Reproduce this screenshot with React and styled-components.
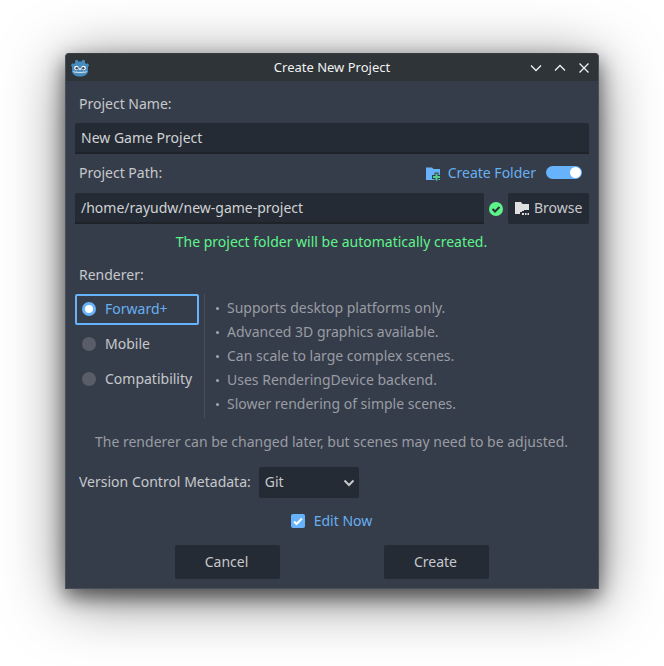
import React from 'react';
import styled, { createGlobalStyle } from 'styled-components';

const Global = createGlobalStyle`
  html, body { margin: 0; padding: 0; background: #fff; }
  body { width: 664px; height: 666px; overflow: hidden; font-family: "Noto Sans", sans-serif; }
`;
const Stage = styled.div`padding: 53px 65px 77px;`;
const Win = styled.div`
  width: 534px; height: 536px; box-sizing: border-box; background: #363d4a;
  border: 1px solid #4a505a; border-top-color: #3a3e42; border-radius: 4px 4px 0 0;
  box-shadow: 0 8px 20px rgba(0,0,0,.55), 0 10px 60px rgba(0,0,0,.5);
  display: flex; flex-direction: column; overflow: hidden;
`;
const TitleBar = styled.div`
  height: 27px; flex: none; background: #2f3438; display: flex; align-items: center;
  padding: 0 6px 0 5px; position: relative; color: #f0f1f2; font-size: 13px;
`;
const Title = styled.div`position: absolute; left: 0; right: 0; text-align: center; top: 4px; line-height: 19px;`;
const Controls = styled.div`margin-left: auto; display: flex; gap: 8px; z-index: 1;`;
const Content = styled.div`
  padding: 13px 9px 0; display: flex; flex-direction: column; color: #c6c8cc; font-size: 14px; line-height: 19px;
`;
const Label = styled.div`padding-left: 4px; height: 19px; line-height: 19px;`;
const Field = styled.div`
  height: 31px; box-sizing: border-box; background: #252b34; border-bottom: 2px solid #1e2229; border-radius: 2px 2px 0 0;
  color: #d0d2d5; padding: 5px 6px; line-height: 19px; ${p => p.$grow ? 'flex: 1;' : ''}
`;
const NameField = styled(Field)`margin-top: 10px;`;
const PathHead = styled.div`display: flex; align-items: center; margin-top: 9px; height: 19px; padding: 0 7px 0 4px;`;
const FolderToggle = styled.div`margin-left: auto; display: flex; align-items: center; color: #66b0f2; gap: 7px;`;
const Toggle = styled.div`
  width: 36px; height: 13px; margin-left: 3px; background: #66b3fb; border-radius: 7px; display: flex; justify-content: flex-end; align-items: center; padding-right: 1px; box-sizing: border-box;
  &::after { content: ""; width: 11px; height: 11px; background: #fff; border-radius: 50%; }
`;
const PathRow = styled.div`display: flex; align-items: center; margin-top: 11px;`;
const OkIcon = styled.svg`margin: 0 5px; flex: none;`;
const Browse = styled.div`
  width: 81px; height: 31px; box-sizing: border-box; background: #252b34; border-radius: 2px; display: flex; align-items: center; gap: 5px; padding: 0 0 2px 7px; color: #c6c8cc;
`;
const Valid = styled.div`text-align: center; color: #5df58a; margin-top: 8px; height: 19px; padding-right: 1px;`;
const RendererLabel = styled(Label)`margin-top: 14px;`;
const RendererRow = styled.div`display: flex; margin-top: 10px; height: 124px;`;
const Radios = styled.div`width: 124px; flex: none; display: flex; flex-direction: column; gap: 4px;`;
const Radio = styled.div`
  height: 31px; box-sizing: border-box; display: flex; align-items: center; gap: 9px; padding: 0 0 1px 5px;
  color: ${p => p.$on ? '#66b0f2' : '#c6c8cc'};
  ${p => p.$on ? 'border: 2px solid #66b3fb; border-radius: 2px;' : 'border: 2px solid transparent;'}
`;
const RadioText = styled.span`margin-bottom: 1px;`;
const Dot = styled.span`
  width: 14px; height: 14px; border-radius: 50%; flex: none; box-sizing: border-box;
  ${p => p.$on ? 'background: #fff; border: 3px solid #66b3fb;' : 'background: #585d67;'}
`;
const Sep = styled.div`width: 1px; background: #4a505b; margin-left: 5px; flex: none;`;
const Info = styled.ul`
  list-style: none; margin: 0; padding: 2px 0 0 11px; color: #999ca3; display: flex; flex-direction: column;
`;
const Item = styled.li`
  height: 24px; line-height: 24px; display: flex; align-items: center; gap: 8px;
  &::before { content: ""; width: 3px; height: 3px; border-radius: 50%; background: #a5a8ad; flex: none; }
`;
const Note = styled.div`text-align: center; color: #999ca3; margin-top: 14px; height: 19px; padding-right: 1px;`;
const VcsRow = styled.div`display: flex; align-items: center; gap: 8px; margin-top: 16px; padding-left: 4px;`;
const VcsLabel = styled.span`margin-bottom: 2px;`;
const Select = styled.div`
  width: 100px; height: 31px; box-sizing: border-box; background: #252b34; border-radius: 2px; padding: 0 4px 0 6px; display: flex; align-items: center; justify-content: space-between; color: #c6c8cc;
`;
const SelectText = styled.span`margin-bottom: 2px;`;
const EditRow = styled.div`display: flex; align-items: center; justify-content: center; gap: 9px; margin-top: 13px; color: #66b0f2; height: 19px; padding-right: 1px;`;
const Check = styled.svg`flex: none;`;
const Buttons = styled.div`display: flex; justify-content: center; gap: 104px; margin-top: 15px;`;
const Button = styled.div`
  width: 105px; height: 34px; box-sizing: border-box; padding: 0 2px 2px 0; background: #252b34; border-radius: 2px; display: flex; align-items: center; justify-content: center; color: #c6c8cc;
`;

const Ctl = ({ d }) => (
  <svg width="16" height="16" viewBox="0 0 16 16" fill="none" stroke="#f0f1f2" strokeWidth="1.3"><path d={d} /></svg>
);
const Logo = () => (
  <svg width="18" height="18" viewBox="0 0 18 18">
    <path fill="#478cbf" d="M6.300 .8l1 1.700h3.400l1-1.700 2.400.8-.2 2.200 1.400 1.100 1.700-.6L18 6.500l-1 1.600V13c-1 2.500-3.500 4.500-8 4.500S2 15.500 1 13V8.100L0 6.500l1.100-2.200 1.700.6 1.400-1.100L4 1.600z" />
    <circle cx="5.400" cy="9" r="2.300" fill="#fff" /><circle cx="12.600" cy="9" r="2.300" fill="#fff" />
    <circle cx="5.700" cy="9.200" r="1.200" fill="#414042" /><circle cx="12.300" cy="9.200" r="1.200" fill="#414042" />
    <rect x="8.300" y="9" width="1.400" height="2" fill="#fff" />
    <path d="M2.500 12.500q1.700 1.500 3.200.5 1.600 1.200 3.300.2 1.700 1 3.300-.2 1.500 1 3.200-.5" fill="none" stroke="#fff" strokeWidth=".9" />
  </svg>
);

export default function App() {
  const info = [
    'Supports desktop platforms only.', 'Advanced 3D graphics available.', 'Can scale to large complex scenes.',
    'Uses RenderingDevice backend.', 'Slower rendering of simple scenes.',
  ];
  return (
    <Stage>
      <Global />
      <Win>
        <TitleBar>
          <Logo />
          <Title>Create New Project</Title>
          <Controls>
            <Ctl d="M3 5.500l5 5 5-5" />
            <Ctl d="M3 10.500l5-5 5 5" />
            <Ctl d="M3.500 3.500l9 9m0-9l-9 9" />
          </Controls>
        </TitleBar>
        <Content>
          <Label>Project Name:</Label>
          <NameField>New Game Project</NameField>
          <PathHead>
            <span>Project Path:</span>
            <FolderToggle>
              <svg width="16" height="16" viewBox="0 0 16 16">
                <path fill="#66b3fb" d="M1 2.500h6l1.500 1.500H15v11H1z" />
                <path fill="#4fd08a" stroke="#363d4a" strokeWidth="2" paintOrder="stroke" d="M10.500 8.500h2V11H15v2h-2.500v2.500h-2V13H8v-2h2.500z" />
              </svg>
              <span>Create Folder</span>
              <Toggle />
            </FolderToggle>
          </PathHead>
          <PathRow>
            <Field $grow>/home/rayudw/new-game-project</Field>
            <OkIcon width="14" height="14" viewBox="0 0 14 14">
              <circle cx="7" cy="7" r="7" fill="#5df58a" />
              <path d="M3.500 7l2.500 2.500 4.500-4.500" fill="none" stroke="#2a3038" strokeWidth="2" />
            </OkIcon>
            <Browse>
              <svg width="14" height="14" viewBox="0 0 14 14">
                <path fill="#e0e0e0" d="M0 1h6l1.500 2H14v6H9v1H7v1H5v2H0z" />
                <path fill="#e0e0e0" d="M7 12h2v2H7zm3 0h1.500v2H10zm2.500 0H14v2h-1.500z" />
              </svg>
              <span>Browse</span>
            </Browse>
          </PathRow>
          <Valid>The project folder will be automatically created.</Valid>
          <RendererLabel>Renderer:</RendererLabel>
          <RendererRow>
            <Radios>
              <Radio $on><Dot $on /><RadioText>Forward+</RadioText></Radio>
              <Radio><Dot /><RadioText>Mobile</RadioText></Radio>
              <Radio><Dot /><RadioText>Compatibility</RadioText></Radio>
            </Radios>
            <Sep />
            <Info>{info.map(t => <Item key={t}>{t}</Item>)}</Info>
          </RendererRow>
          <Note>The renderer can be changed later, but scenes may need to be adjusted.</Note>
          <VcsRow>
            <VcsLabel>Version Control Metadata:</VcsLabel>
            <Select>
              <SelectText>Git</SelectText>
              <svg width="12" height="12" viewBox="0 0 12 12" fill="none" stroke="#c6c8cc" strokeWidth="2"><path d="M1.500 3.500l4.500 4.500L10.500 3.500" /></svg>
            </Select>
          </VcsRow>
          <EditRow>
            <Check width="14" height="14" viewBox="0 0 14 14">
              <rect width="14" height="14" rx="2" fill="#66b3fb" />
              <path d="M3 7.500l2.500 2.500 5.500-5.500" fill="none" stroke="#fff" strokeWidth="2" />
            </Check>
            <span>Edit Now</span>
          </EditRow>
          <Buttons>
            <Button>Cancel</Button>
            <Button>Create</Button>
          </Buttons>
        </Content>
      </Win>
    </Stage>
  );
}
